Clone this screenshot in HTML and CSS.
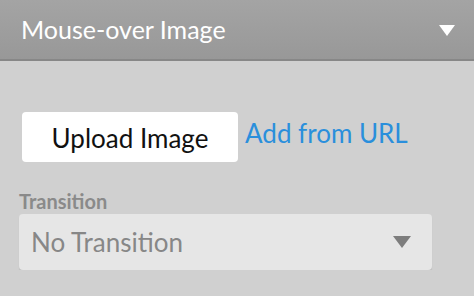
FILE: index.html
```html
<!DOCTYPE html>
<html lang="en">
<head>
    <meta charset="UTF-8">
    <title>Mouse-over Image</title>
    <link rel="stylesheet" href="styles.css">
</head>
<body>
    <div class="panel">
        <div class="panel-head">
            <span class="panel-title">Mouse-over Image</span>
            <span class="caret caret-white"></span>
        </div>
        <div class="panel-body">
            <div class="upload-row">
                <button type="button" class="upload-btn">Upload Image</button>
                <a href="#" class="url-link">Add from URL</a>
            </div>
            <label class="field-label" for="transition">Transition</label>
            <div class="select-box" id="transition">
                <span class="select-value">No Transition</span>
                <span class="caret caret-gray"></span>
            </div>
        </div>
    </div>
</body>
</html>
```

FILE: styles.css
```css
body {
    margin: 0;
    font-family: Lato, "Open Sans", sans-serif;
    background: #d0d0d0;
}
.panel-head {
    height: 59px;
    display: flex;
    align-items: center;
    justify-content: space-between;
    padding: 0 19px 0 21px;
    background: linear-gradient(#a4a4a4, #989898);
    border-bottom: 2px solid #878787;
}
.panel-title {
    color: #fff;
    font-size: 25px;
    margin-top: -1px;
}
.caret {
    width: 0;
    height: 0;
    border-left: 8.5px solid transparent;
    border-right: 8.5px solid transparent;
}
.caret-white {
    border-top: 11px solid #fff;
    margin-top: 2px;
}
.caret-gray {
    border-left-width: 9.5px;
    border-right-width: 9.5px;
    border-top: 12px solid #7d7d7d;
}
.panel-body {
    padding: 51px 42px 0 19px;
}
.upload-row {
    display: flex;
    align-items: center;
    padding-left: 3px;
}
.upload-btn {
    width: 216px;
    height: 50px;
    border: none;
    border-radius: 4px;
    background: #fff;
    color: #111;
    font-family: inherit;
    font-size: 26px;
    padding: 0;
    padding-top: 1px;
}
.url-link {
    margin-left: 7px;
    margin-top: -9px;
    color: #2a8fdc;
    font-size: 26px;
    text-decoration: none;
}
.field-label {
    display: block;
    margin-top: 28px;
    color: #8a8a8a;
    font-size: 20px;
    font-weight: bold;
    line-height: 22px;
}
.select-box {
    margin-top: 2px;
    height: 56px;
    display: flex;
    align-items: center;
    justify-content: space-between;
    padding: 0 21px 0 12px;
    background: #e6e6e6;
    border-radius: 4px;
    box-shadow: 0 2px 1px #bdbdbd;
}
.select-value {
    color: #878787;
    font-size: 26px;
}
```
